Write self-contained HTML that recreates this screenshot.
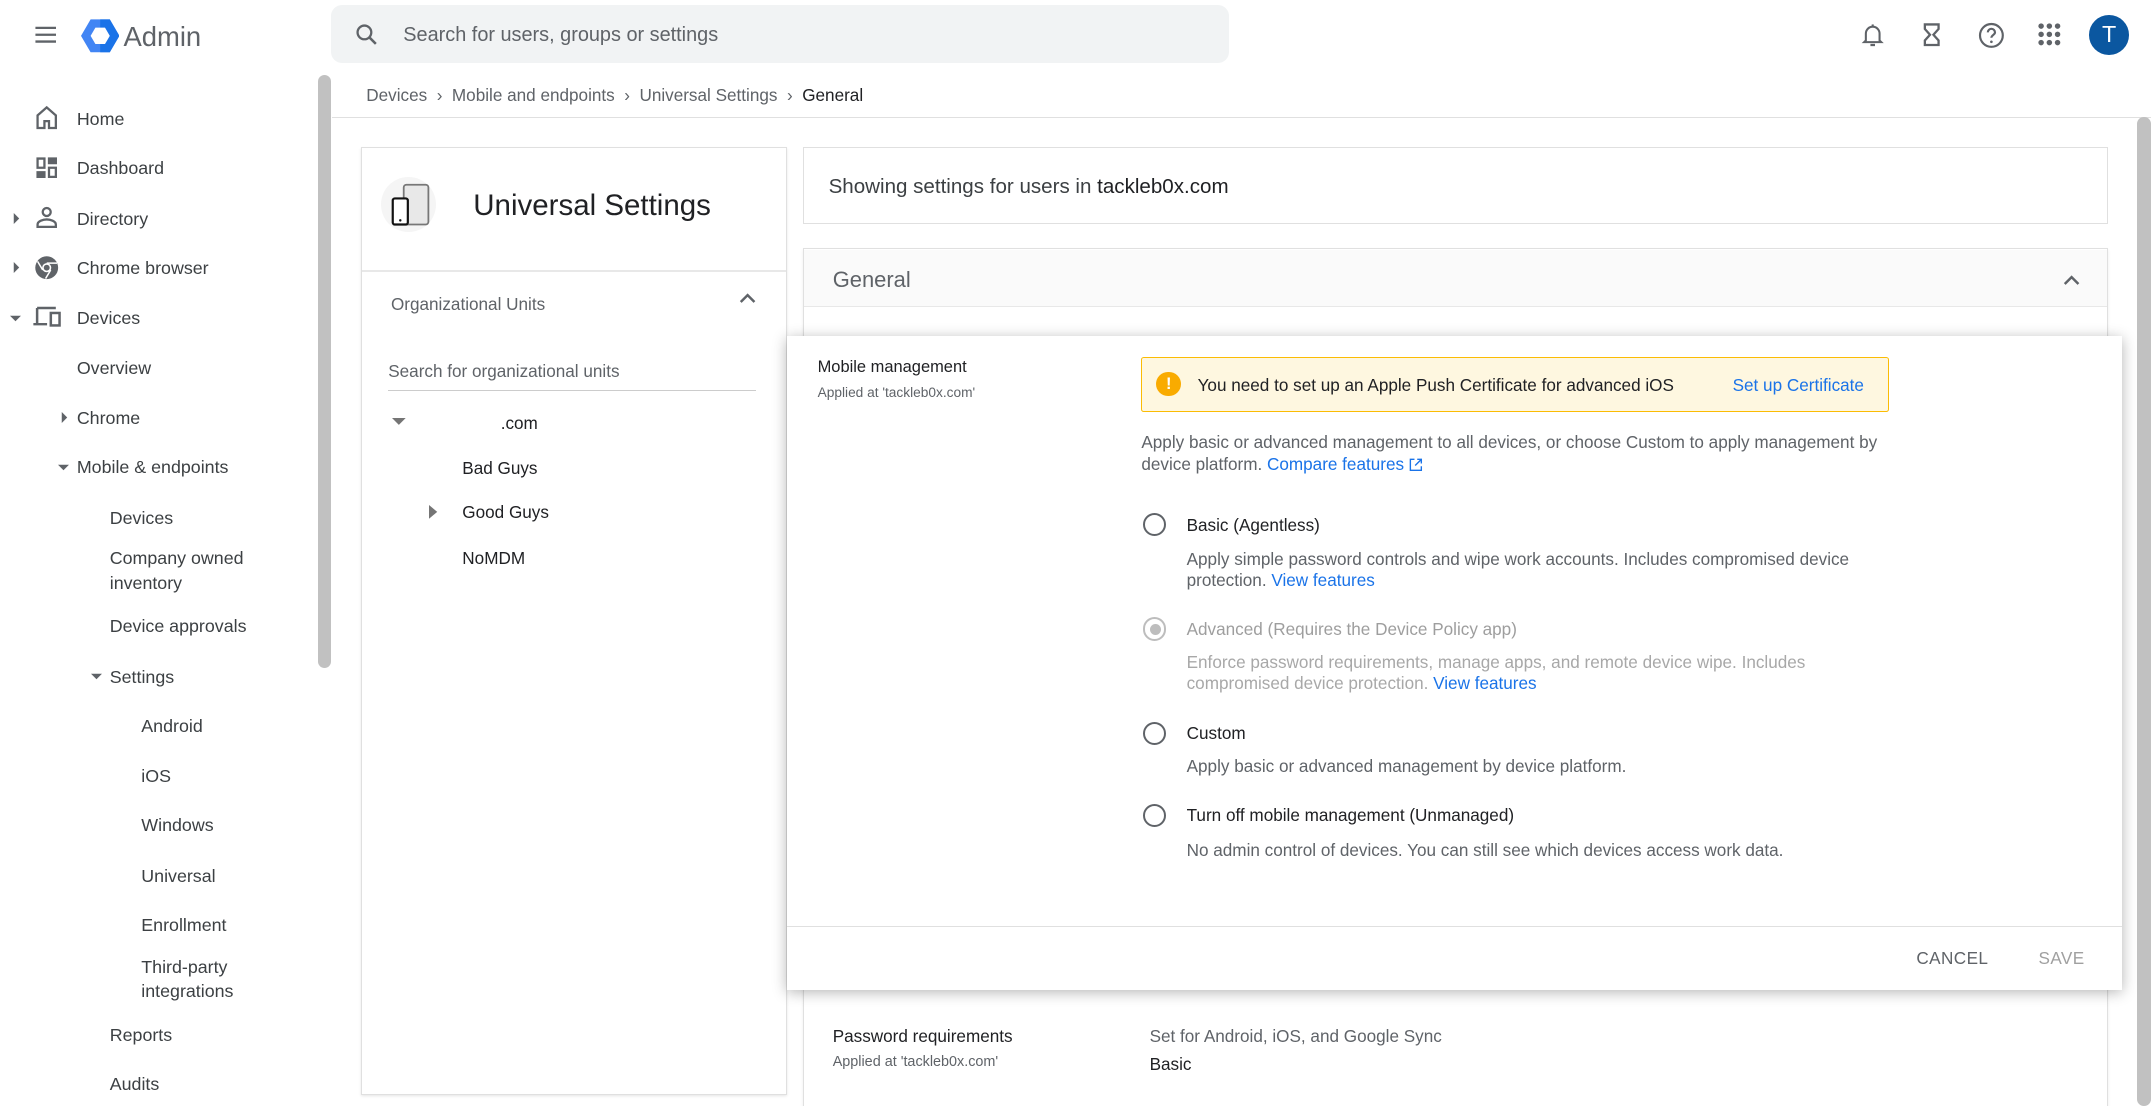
<!DOCTYPE html>
<html><head><meta charset="utf-8"><style>
html,body{margin:0;padding:0;background:#fff;overflow:hidden}
#w{zoom:1.37181;width:1568px;height:806px;position:relative;font-family:"Liberation Sans",Arial,sans-serif;color:#202124;overflow:hidden}
.t{position:absolute;line-height:20px;white-space:nowrap;margin-top:1px}
.s{font-size:13px;color:#3c4043}
.ab{position:absolute}
svg{position:absolute}
.g{color:#5f6368}
a{color:#1a73e8;text-decoration:none}
.rad{position:absolute;width:14px;height:14px;border:2px solid #5f6368;border-radius:50%}
</style></head><body><div id="w">
<!-- top bar -->
<svg style="left:23px;top:15px" width="20" height="20" viewBox="0 0 24 24"><path d="M3 6h18M3 12h18M3 18h18" stroke="#5f6368" stroke-width="2"/></svg>
<svg style="left:59px;top:13px" width="28" height="26" viewBox="0 0 28 26"><polygon points="7,1 21,1 28,13 21,25 7,25 0,13" fill="#4285f4"/><polygon points="14,1 21,1 28,13 21,25 14,25" fill="#1a73e8"/><polygon points="10.5,7 17.5,7 21,13 17.5,19 10.5,19 7,13" fill="#fff"/></svg>
<div class="t" style="left:90px;top:13px;font-size:20px;line-height:26px;color:#5f6368">Admin</div>
<div class="ab" style="left:241px;top:4px;width:655px;height:42px;background:#f1f3f4;border-radius:8px"></div>
<svg style="left:257px;top:15px" width="20" height="20" viewBox="0 0 24 24"><circle cx="10" cy="10" r="6" fill="none" stroke="#5f6368" stroke-width="2"/><path d="M14.5 14.5L20 20" stroke="#5f6368" stroke-width="2.2"/></svg>
<div class="t" style="left:294px;top:15px;font-size:14.5px;color:#5f6368">Search for users, groups or settings</div>
<svg style="left:1355px;top:15px" width="20" height="20" viewBox="0 0 24 24"><path d="M6 17V11a6 6 0 0112 0v6l1.5 1.5h-15z" fill="none" stroke="#5f6368" stroke-width="1.8"/><path d="M10 21h4" stroke="#5f6368" stroke-width="2"/><path d="M12 3v2" stroke="#5f6368" stroke-width="1.8"/></svg>
<svg style="left:1398px;top:15px" width="20" height="20" viewBox="0 0 24 24"><path d="M6 3h12v4l-4.5 5 4.5 5v4H6v-4l4.5-5L6 7z" fill="none" stroke="#5f6368" stroke-width="2"/></svg>
<svg style="left:1441px;top:15px" width="21" height="21" viewBox="0 0 24 24"><circle cx="12" cy="12" r="9.5" fill="none" stroke="#5f6368" stroke-width="1.8"/><path d="M9 9.5a3 3 0 116 0c0 2-3 2.3-3 4.5" fill="none" stroke="#5f6368" stroke-width="1.8"/><circle cx="12" cy="17.3" r="1.1" fill="#5f6368"/></svg>
<svg style="left:1485px;top:16px" width="18" height="18" viewBox="0 0 18 18" fill="#5f6368"><circle cx="3" cy="3" r="2"/><circle cx="9" cy="3" r="2"/><circle cx="15" cy="3" r="2"/><circle cx="3" cy="9" r="2"/><circle cx="9" cy="9" r="2"/><circle cx="15" cy="9" r="2"/><circle cx="3" cy="15" r="2"/><circle cx="9" cy="15" r="2"/><circle cx="15" cy="15" r="2"/></svg>
<div class="ab" style="left:1523px;top:11px;width:29px;height:29px;border-radius:50%;background:#0b57a0;color:#fff;font-size:17px;line-height:29px;text-align:center">T</div>
<!-- sidebar -->
<svg style="left:24px;top:76px" width="20" height="20" viewBox="0 0 24 24"><path d="M4 21V10l8-7 8 7v11h-6v-6h-4v6z" fill="none" stroke="#5f6368" stroke-width="2"/></svg>
<svg style="left:24px;top:112px" width="20" height="20" viewBox="0 0 24 24" fill="#5f6368"><path d="M3 3h8v10H3zM13 3h8v6h-8zM13 11h8v10h-8zM3 15h8v6H3z"/><path d="M5 5h4v6H5zM15 13h4v6h-4z" fill="#fff"/></svg>
<svg style="left:24px;top:149px" width="20" height="20" viewBox="0 0 24 24"><circle cx="12" cy="7" r="3.5" fill="none" stroke="#5f6368" stroke-width="2"/><path d="M4 20v-2c0-3 5-4.5 8-4.5s8 1.5 8 4.5v2z" fill="none" stroke="#5f6368" stroke-width="2"/></svg>
<svg style="left:24px;top:185px" width="20" height="20" viewBox="0 0 24 24"><circle cx="12" cy="12" r="10" fill="#5f6368"/><circle cx="12" cy="12" r="4" fill="#fff"/><circle cx="12" cy="12" r="2.6" fill="#5f6368"/><path d="M12 8h9M8.5 14L4 6.5M15.5 14L11 21.5" stroke="#fff" stroke-width="1.3"/></svg>
<svg style="left:23px;top:221px" width="22" height="20" viewBox="0 0 24 22"><path d="M4 4h15M4 4v12M1 17h11" fill="none" stroke="#5f6368" stroke-width="2"/><rect x="15" y="8" width="7" height="10" fill="none" stroke="#5f6368" stroke-width="2"/></svg>
<svg style="left:8px;top:155px" width="8" height="8" viewBox="0 0 8 8"><path d="M2 0l4 4-4 4z" fill="#5f6368"/></svg>
<svg style="left:8px;top:191px" width="8" height="8" viewBox="0 0 8 8"><path d="M2 0l4 4-4 4z" fill="#5f6368"/></svg>
<svg style="left:7px;top:228px" width="8" height="8" viewBox="0 0 8 8"><path d="M0 2h8l-4 4z" fill="#5f6368"/></svg>
<svg style="left:43px;top:300px" width="8" height="8" viewBox="0 0 8 8"><path d="M2 0l4 4-4 4z" fill="#5f6368"/></svg>
<svg style="left:42px;top:337px" width="8" height="8" viewBox="0 0 8 8"><path d="M0 2h8l-4 4z" fill="#5f6368"/></svg>
<svg style="left:66px;top:489px" width="8" height="8" viewBox="0 0 8 8"><path d="M0 2h8l-4 4z" fill="#5f6368"/></svg>
<div class="t s" style="left:56px;top:76px">Home</div>
<div class="t s" style="left:56px;top:112px">Dashboard</div>
<div class="t s" style="left:56px;top:149px">Directory</div>
<div class="t s" style="left:56px;top:185px">Chrome browser</div>
<div class="t s" style="left:56px;top:221px">Devices</div>
<div class="t s" style="left:56px;top:258px">Overview</div>
<div class="t s" style="left:56px;top:294px">Chrome</div>
<div class="t s" style="left:56px;top:330px">Mobile &amp; endpoints</div>
<div class="t s" style="left:80px;top:367px">Devices</div>
<div class="t s" style="left:80px;top:397px;line-height:18px">Company owned<br>inventory</div>
<div class="t s" style="left:80px;top:446px">Device approvals</div>
<div class="t s" style="left:80px;top:483px">Settings</div>
<div class="t s" style="left:103px;top:519px">Android</div>
<div class="t s" style="left:103px;top:555px">iOS</div>
<div class="t s" style="left:103px;top:591px">Windows</div>
<div class="t s" style="left:103px;top:628px">Universal</div>
<div class="t s" style="left:103px;top:664px">Enrollment</div>
<div class="t s" style="left:103px;top:695px;line-height:18px">Third-party<br>integrations</div>
<div class="t s" style="left:80px;top:744px">Reports</div>
<div class="t s" style="left:80px;top:780px">Audits</div>
<div class="ab" style="left:232px;top:55px;width:9px;height:432px;background:#c1c1c1;border-radius:5px"></div>
<!-- breadcrumb -->
<div class="ab" style="left:242px;top:85px;width:1326px;height:1px;background:#e0e0e0"></div>
<div class="t g" style="left:267px;top:59px;font-size:12.5px">Devices &nbsp;›&nbsp; Mobile and endpoints &nbsp;›&nbsp; Universal Settings &nbsp;›&nbsp; <span style="color:#202124">General</span></div>
<div class="ab" style="left:1558px;top:85px;width:10px;height:721px;background:#c1c1c1;border-radius:5px"></div>
<!-- left card -->
<div class="ab" style="left:263px;top:107px;width:309px;height:690px;border:1px solid #e0e0e0;box-shadow:0 1px 2px rgba(0,0,0,.1);background:#fff"></div>
<div class="ab" style="left:278px;top:129px;width:40px;height:40px;border-radius:50%;background:#f5f5f5"></div>
<svg style="left:284px;top:133px" width="32" height="34" viewBox="0 0 32 34"><rect x="10" y="2" width="18" height="29" rx="2" fill="#e8e8e8" stroke="#777" stroke-width="1.3"/><rect x="2" y="12" width="11" height="19" rx="1.5" fill="#fff" stroke="#111" stroke-width="1.6"/><circle cx="7.5" cy="28" r=".9" fill="#111"/></svg>
<div class="t" style="left:345px;top:136px;font-size:21.5px;line-height:26px">Universal Settings</div>
<div class="ab" style="left:264px;top:197px;width:309px;height:1px;background:#e8e8e8"></div>
<div class="t g" style="left:285px;top:211px;font-size:12.5px">Organizational Units</div>
<svg style="left:538px;top:212px" width="14" height="10" viewBox="0 0 14 10"><path d="M2 8l5-5 5 5" fill="none" stroke="#5f6368" stroke-width="1.8"/></svg>
<div class="t g" style="left:283px;top:260px;font-size:12.5px">Search for organizational units</div>
<div class="ab" style="left:283px;top:284px;width:268px;height:1px;background:#ccc"></div>
<svg style="left:286px;top:305px" width="10" height="6" viewBox="0 0 10 6"><path d="M0 0h10L5 5z" fill="#757575"/></svg>
<div class="t" style="left:365px;top:298px;font-size:12.5px">.com</div>
<div class="t" style="left:337px;top:331px;font-size:12.5px">Bad Guys</div>
<svg style="left:313px;top:368px" width="6" height="10" viewBox="0 0 6 10"><path d="M0 0l6 5-6 5z" fill="#757575"/></svg>
<div class="t" style="left:337px;top:363px;font-size:12.5px">Good Guys</div>
<div class="t" style="left:337px;top:396px;font-size:12.5px">NoMDM</div>
<!-- right -->
<div class="ab" style="left:585px;top:107px;width:950px;height:55px;border:1px solid #e0e0e0"></div>
<div class="t" style="left:604px;top:125px;font-size:15px;color:#3c4043">Showing settings for users in <span style="color:#202124">tackleb0x.com</span></div>
<div class="ab" style="left:585px;top:181px;width:950px;height:640px;border:1px solid #e0e0e0;box-shadow:0 1px 2px rgba(0,0,0,.08)"></div>
<div class="ab" style="left:586px;top:182px;width:950px;height:41px;background:#fafafa;border-bottom:1px solid #e8e8e8"></div>
<div class="t g" style="left:607px;top:193px;font-size:16px">General</div>
<svg style="left:1503px;top:199px" width="14" height="10" viewBox="0 0 14 10"><path d="M2 8l5-5 5 5" fill="none" stroke="#5f6368" stroke-width="1.8"/></svg>
<div class="t" style="left:607px;top:745px;font-size:12.5px">Password requirements</div>
<div class="t g" style="left:607px;top:764px;font-size:10.5px">Applied at 'tackleb0x.com'</div>
<div class="t g" style="left:838px;top:745px;font-size:12.5px">Set for Android, iOS, and Google Sync</div>
<div class="t" style="left:838px;top:765px;font-size:12.5px">Basic</div>
<!-- modal panel -->
<div class="ab" style="left:574px;top:245px;width:973px;height:477px;background:#fff;box-shadow:0 2px 10px rgba(0,0,0,.3)"></div>
<div class="t" style="left:596px;top:257px;font-size:12px">Mobile management</div>
<div class="t g" style="left:596px;top:275px;font-size:10px">Applied at 'tackleb0x.com'</div>
<div class="ab" style="left:832px;top:260px;width:545px;height:40px;background:#fef7e0;border:1px solid #fbbc04;border-radius:2px;box-sizing:border-box"></div>
<div class="ab" style="left:843px;top:271px;width:18px;height:18px;border-radius:50%;background:#f9ab00;color:#fff;font-size:12px;line-height:18px;text-align:center;font-weight:bold">!</div>
<div class="t" style="left:873px;top:270px;font-size:12.5px">You need to set up an Apple Push Certificate for advanced iOS</div>
<div class="t" style="left:1263px;top:270px;font-size:12.5px"><a>Set up Certificate</a></div>
<div class="t g" style="left:832px;top:314px;font-size:12.5px;line-height:16px">Apply basic or advanced management to all devices, or choose Custom to apply management by<br>device platform. <a>Compare features</a> <svg style="position:relative;top:1px" width="10" height="10" viewBox="0 0 10 10"><path d="M4 1H1v8h8V6M6 1h3v3M9 1L4.5 5.5" fill="none" stroke="#1a73e8" stroke-width="1"/></svg></div>
<div class="rad" style="left:833px;top:374px"></div>
<div class="t" style="left:865px;top:372px;font-size:12.5px">Basic (Agentless)</div>
<div class="t g" style="left:865px;top:399px;font-size:12.5px;line-height:15.5px">Apply simple password controls and wipe work accounts. Includes compromised device<br>protection. <a>View features</a></div>
<div class="rad" style="left:833px;top:450px;border-color:#bdbdbd"></div>
<div class="ab" style="left:838px;top:455px;width:8px;height:8px;border-radius:50%;background:#bdbdbd"></div>
<div class="t" style="left:865px;top:448px;font-size:12.5px;color:#9e9e9e">Advanced (Requires the Device Policy app)</div>
<div class="t" style="left:865px;top:474px;font-size:12.5px;line-height:15.5px;color:#a8a8a8">Enforce password requirements, manage apps, and remote device wipe. Includes<br>compromised device protection. <a>View features</a></div>
<div class="rad" style="left:833px;top:526px"></div>
<div class="t" style="left:865px;top:524px;font-size:12.5px">Custom</div>
<div class="t g" style="left:865px;top:548px;font-size:12.5px">Apply basic or advanced management by device platform.</div>
<div class="rad" style="left:833px;top:586px"></div>
<div class="t" style="left:865px;top:584px;font-size:12.5px">Turn off mobile management (Unmanaged)</div>
<div class="t g" style="left:865px;top:609px;font-size:12.5px">No admin control of devices. You can still see which devices access work data.</div>
<div class="ab" style="left:574px;top:675px;width:973px;height:1px;background:#e0e0e0"></div>
<div class="t g" style="left:1397px;top:688px;font-size:12.5px;letter-spacing:.3px">CANCEL</div>
<div class="t" style="left:1486px;top:688px;font-size:12.5px;color:#a0a0a0;letter-spacing:.3px">SAVE</div>
</div></body></html>
